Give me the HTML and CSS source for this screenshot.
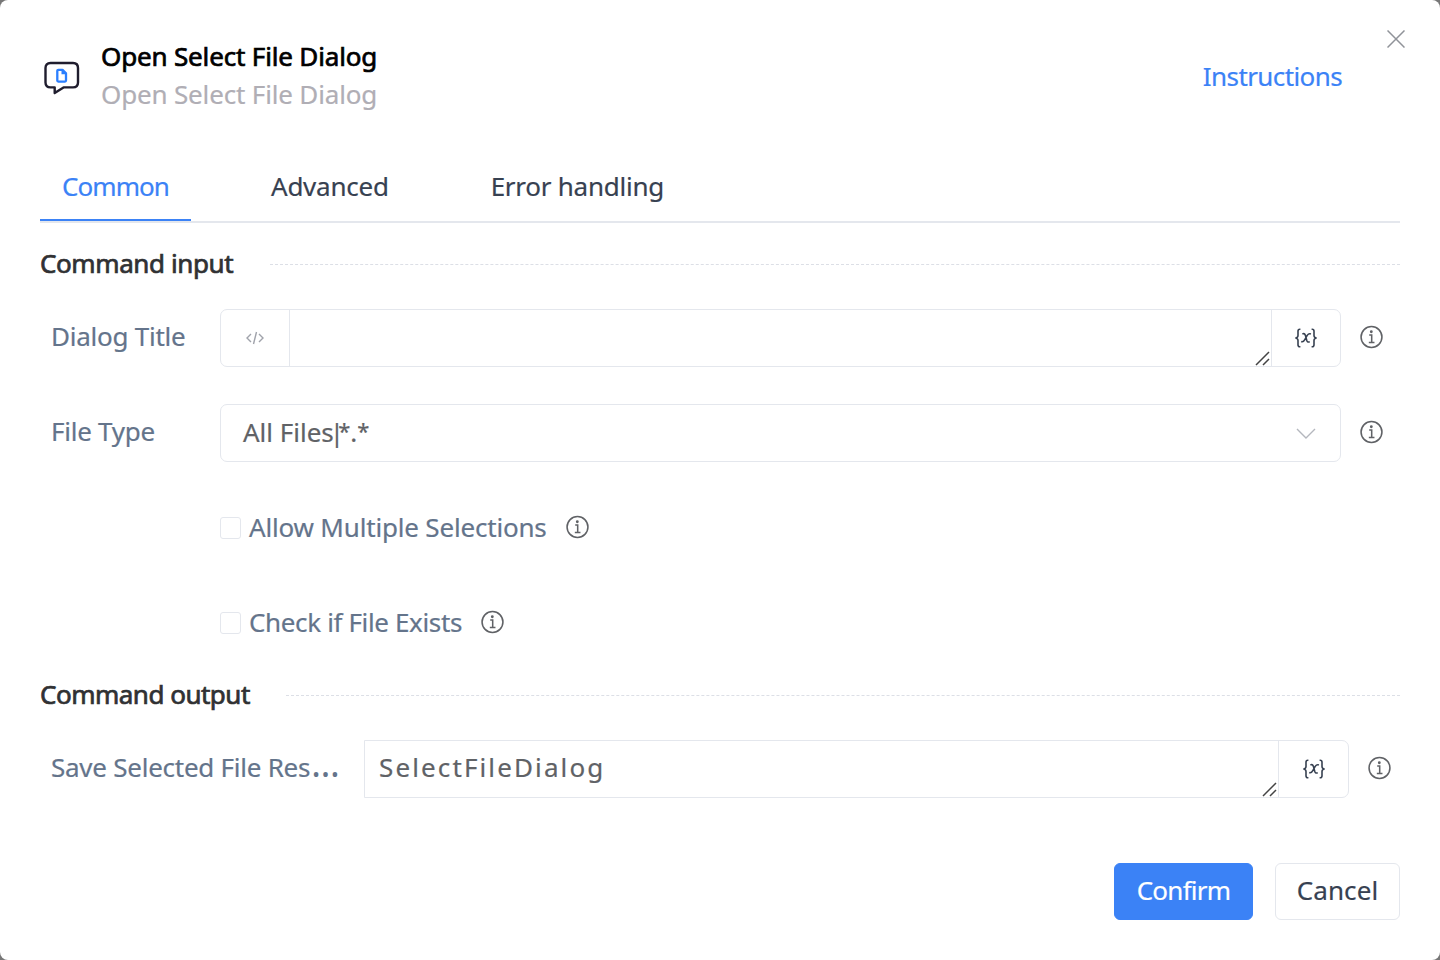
FILE: index.html
```
<!DOCTYPE html>
<html lang="en">
<head>
<meta charset="utf-8">
<title>Open Select File Dialog</title>
<link rel="stylesheet" href="styles.css">
</head>
<body>
<svg class="sprite" aria-hidden="true">
  <symbol id="info" viewBox="0 0 24 24"><circle cx="12" cy="12" r="10.9" fill="none" stroke="currentColor" stroke-width="1.6"/><circle cx="11.800" cy="6.500" r="1.500" fill="currentColor"/><path d="M9.600 10h2.600v7.300M9.200 17.700h5.900" fill="none" stroke="currentColor" stroke-width="1.600"/></symbol>
  <symbol id="variable" viewBox="0 0 24 20"><path d="M6.400 1.200H5.800Q4 1.200 4 3.200V7.400Q4 9.700 1.400 10Q4 10.300 4 12.600V16.800Q4 18.800 5.800 18.800H6.400M17.600 1.200H18.200Q20 1.200 20 3.200V7.400Q20 9.700 22.600 10Q20 10.300 20 12.600V16.800Q20 18.800 18.200 18.800H17.600M8.400 6Q10.600 4.900 11.400 7.400L12.800 12.400Q13.600 14.800 15.700 13.600M16.900 6Q14.800 5 13.200 7.400L10.800 11.600Q9.200 14.400 7.200 13.500" fill="none" stroke="currentColor" stroke-width="1.600"/></symbol>
  <symbol id="grip" viewBox="0 0 15 15"><path d="M1 14L14 1M8 14L14 8" fill="none" stroke="currentColor" stroke-width="1.500"/></symbol>
</svg>
<main class="dialog">
  <button class="close" aria-label="Close"><svg viewBox="0 0 18 18"><path d="M.5.5l17 17M17.500.500l-17 17"/></svg></button>
  <header class="header">
    <svg class="logo" viewBox="0 0 36 36"><path d="M6.500 3H29Q34 3 34 8V22.500Q34 27.400 29 27.400H19.500L10.700 33V27.400H6.500Q1.500 27.400 1.500 22.500V8Q1.500 3 6.500 3Z" fill="none" stroke="#1f1d2e" stroke-width="2.400" stroke-linejoin="round"/><path d="M14.300 9.800H18.500L22 13.400V20.600Q22 21.600 21 21.600H14.300Q13.300 21.600 13.300 20.600V10.800Q13.300 9.800 14.300 9.800Z" fill="none" stroke="#2b7fff" stroke-width="2.300" stroke-linejoin="round"/><path d="M17.500 10V14.300H22.500L21 12Z" fill="#2b7fff"/></svg>
    <div class="titles">
      <h1 class="title">Open Select File Dialog</h1>
      <p class="subtitle">Open Select File Dialog</p>
    </div>
    <a class="instructions">Instructions</a>
  </header>
  <nav class="tabs"><a class="tab active">Common</a><a class="tab">Advanced</a><a class="tab">Error handling</a></nav>
  <h2 class="section"><span>Command input</span></h2>
  <div class="row">
    <label class="label">Dialog Title</label>
    <div class="field"><span class="prefix"><svg viewBox="0 0 18 14"><path d="M5 3L1 7l4 4M13 3l4 4-4 4M10.500 1L7.500 13"/></svg></span><span class="input"><svg class="grip"><use href="#grip"/></svg></span><span class="suffix narrow"><svg><use href="#variable"/></svg></span></div>
    <svg class="info"><use href="#info"/></svg>
  </div>
  <div class="row">
    <label class="label">File Type</label>
    <div class="field select"><span class="value">All Files<span class="bar">|</span><span class="star">*</span>.<span class="star">*</span></span><svg class="chevron" viewBox="0 0 20 11"><path d="M1 1l9 9 9-9"/></svg></div>
    <svg class="info"><use href="#info"/></svg>
  </div>
  <div class="check-row"><span class="box"></span><span class="check-label">Allow Multiple Selections</span><svg class="info"><use href="#info"/></svg></div>
  <div class="check-row"><span class="box"></span><span class="check-label exists">Check if File Exists</span><svg class="info"><use href="#info"/></svg></div>
  <h2 class="section output"><span>Command output</span></h2>
  <div class="row result">
    <label class="label">Save Selected File Res<span class="dots">…</span></label>
    <div class="field square"><span class="input">SelectFileDialog<svg class="grip"><use href="#grip"/></svg></span><span class="suffix"><svg><use href="#variable"/></svg></span></div>
    <svg class="info"><use href="#info"/></svg>
  </div>
  <footer class="footer"><button class="btn primary">Confirm</button><button class="btn">Cancel</button></footer>
</main>
</body>
</html>
```
FILE: styles.css
```
*{box-sizing:border-box}
body{margin:0;background:#777;font:26px/38px "Noto Sans",sans-serif;color:#374151;-webkit-text-stroke:.2px currentColor}
h1,h2,p{margin:0;font-size:inherit;font-weight:400}
svg{display:block;flex:none}
.sprite{position:absolute;width:0;height:0}
.dialog{position:relative;width:1440px;height:960px;padding:37px 40px 40px;background:#fff;border-radius:8px;display:flex;flex-direction:column}
.close{position:absolute;top:30px;right:35px;width:18px;height:18px;padding:0;border:0;background:none}
.close svg{fill:none;stroke:#909399;stroke-width:1.5}
.header{display:flex;align-items:center;height:76px;padding:0 58px 0 4px}
.logo{width:36px;height:36px;margin-top:6px}
.titles{margin-left:21px;flex:1;letter-spacing:-.16px}
.title{color:#000;-webkit-text-stroke:.7px #000}
.subtitle{color:#b0aeb5}
.instructions{margin-top:2px;color:#3b82f6;letter-spacing:-.6px}
.tabs{display:flex;gap:58px;height:70px;margin-top:40px;border-bottom:2px solid #e4e7ed}
.tab{height:68px;padding:14px 22px 0;letter-spacing:-.25px}
.tab.active{color:#3b82f6;border-bottom:2px solid #3b82f6;letter-spacing:-.93px}
.section{display:flex;align-items:center;gap:37px;height:38px;margin-top:22px;color:#303133;letter-spacing:-.4px;-webkit-text-stroke:.7px #303133}
.section span{padding-bottom:2px}
.section::after{content:"";flex:1;border-top:1px dashed #dcdfe6}
.row{display:flex;align-items:center;height:58px;margin-top:37px;padding-left:11px}
.section + .row{margin-top:26px}
.label{width:169px;padding-bottom:4px;color:#64748b;white-space:nowrap;letter-spacing:-.25px}
.field{display:flex;width:1121px;height:58px;border:1px solid #e4e7ed;border-radius:7px}
.prefix{display:flex;align-items:center;justify-content:center;width:69px;border-right:1px solid #e4e7ed}
.prefix svg{width:18px;height:14px;fill:none;stroke:#a0a3ab;stroke-width:1.4}
.input{position:relative;flex:1;padding:7px 14px;color:#606266;letter-spacing:2.12px}
.grip{position:absolute;right:1px;bottom:0;width:15px;height:15px;color:#444}
.suffix{display:flex;align-items:center;justify-content:center;width:70px;border-left:1px solid #e4e7ed}
.narrow{width:69px}
.suffix svg{width:24px;height:20px}
.info{width:23px;height:24px;margin:0 0 2px 19px;color:#606266}
.select{align-items:center;justify-content:space-between;padding:0 24px 0 22px;color:#606266}
.value{padding-bottom:2px}
.bar{margin-left:-4px;letter-spacing:-6px}
.star{font-size:22px;line-height:0;vertical-align:3px}
.chevron{width:20px;height:11px;fill:none;stroke:#b4b7be;stroke-width:1.4}
.check-row{display:flex;align-items:center;height:58px;margin-top:37px;padding-left:180px;color:#64748b}
.box{width:21px;height:22px;margin-right:8px;border:1px solid #e4e7ed;border-radius:3px}
.check-label{padding-bottom:2px;letter-spacing:-.18px}
.exists{letter-spacing:-.36px}
.output{margin-top:24px;gap:36px;letter-spacing:-.5px}
.result .label{width:313px}
.dots{margin-left:1px;font-size:36px;line-height:0;-webkit-text-stroke:0}
.result .field{width:985px}
.square{border-radius:0 7px 7px 0}
.footer{display:flex;justify-content:flex-end;gap:22px;margin-top:65px}
.btn{width:125px;height:57px;padding:0 0 4px;border:1px solid #e4e7ed;border-radius:6px;background:#fff;font:inherit;color:#374151;letter-spacing:.1px}
.primary{width:139px;border-color:#3b82f6;background:#3b82f6;color:#fff;letter-spacing:-.75px}
```
